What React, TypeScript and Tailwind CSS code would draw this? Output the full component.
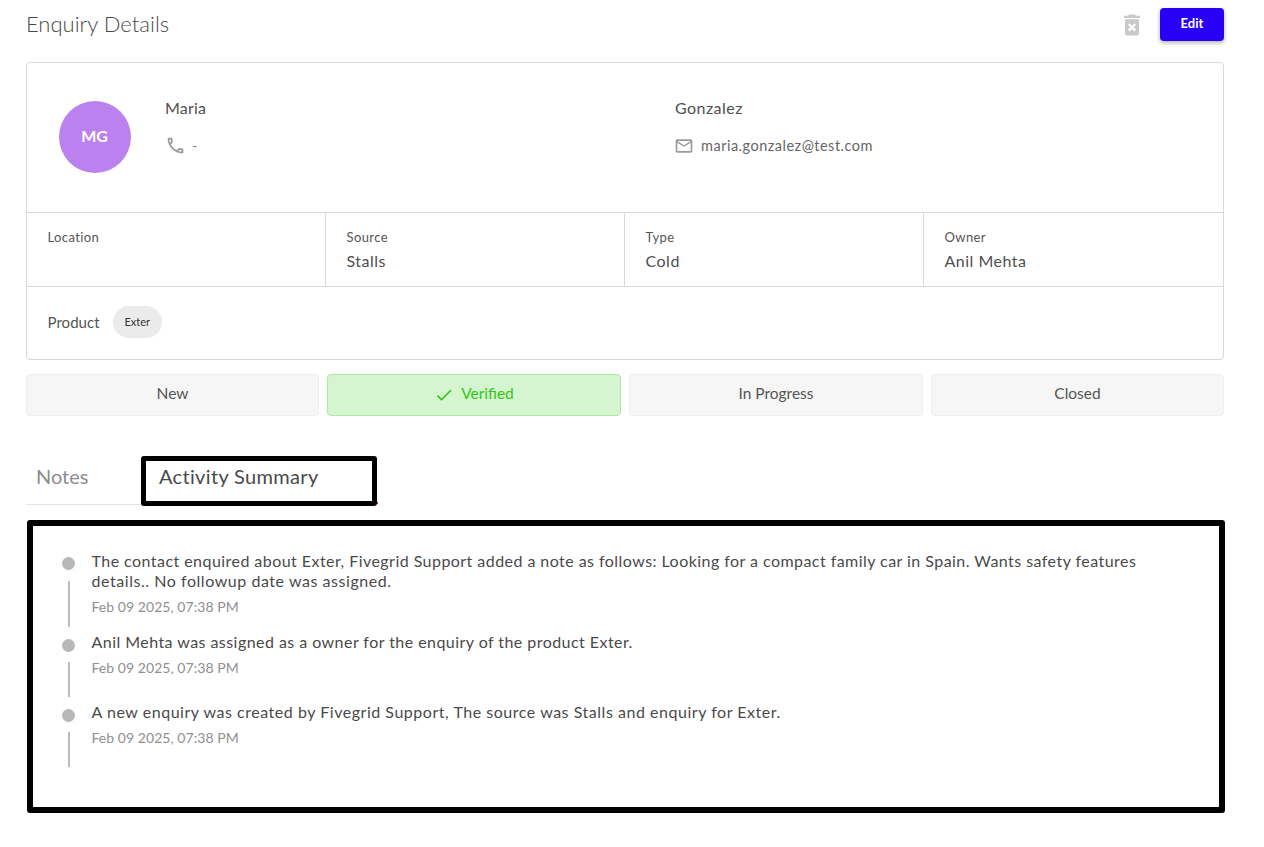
import { MdDeleteForever, MdOutlineCall, MdOutlineMailOutline, MdCheck } from "react-icons/md";

const font = { fontFamily: '"Lato", "Noto Sans", sans-serif' };

function InfoCell({ label, value, last }: { label: string; value?: string; last?: boolean }) {
  return (
    <div className={`h-[74px] pl-[20.5px] pt-[14px] ${last ? "" : "border-r border-[#d9d9d9]"}`}>
      <div className="text-[13px] leading-[20px] text-[#555] tracking-[0.4px]">{label}</div>
      {value && <div className="text-[16px] leading-[28px] text-[#4f4f4f] tracking-[0.5px]">{value}</div>}
    </div>
  );
}

function Status({ label, active }: { label: string; active?: boolean }) {
  return (
    <div
      className={`h-[42px] pb-[2px] flex items-center justify-center rounded-[4px] border text-[15.5px] ${
        active
          ? "bg-[#d5f4d0] border-[#ade8a5] text-[#2fc712]"
          : "bg-[#f6f6f6] border-[#eeeeee] text-[#555]"
      }`}
    >
      {active && <MdCheck className="mr-[7px] mt-[2px] text-[20px]" />}
      {label}
    </div>
  );
}

function Entry({
  lines,
  h,
  dotTop,
  lineClass,
}: {
  lines: { text: string; cls: string }[];
  h: string;
  dotTop: string;
  lineClass: string;
}) {
  return (
    <div className={`flex ${h}`}>
      <div className={`w-[58.5px] shrink-0 pl-[29px] ${dotTop}`}>
        <div className="w-[13px] h-[13px] rounded-full bg-[#b8b8b8]" />
        <div className={`ml-[5.5px] w-[2px] bg-[#bcbcbc] ${lineClass}`} />
      </div>
      <div className="flex-1 pr-[60px]">
        {lines.map((l) => (
          <div key={l.text} className={`text-[16px] leading-[20px] text-[#4a4a4a] ${l.cls}`}>
            {l.text}
          </div>
        ))}
        <div className="mt-[6px] text-[14px] leading-[20px] text-[#909090] tracking-[0.05px]">Feb 09 2025, 07:38 PM</div>
      </div>
    </div>
  );
}

export default function App() {
  return (
    <div style={font} className="w-[1264px] h-[847px] bg-white pl-[26px] pr-[40px] overflow-hidden">
      <div className="flex items-center justify-between h-[62px] pb-[16px]">
        <div className="text-[22px] text-[#4a4a4a] font-light tracking-[0px]">Enquiry Details</div>
        <div className="flex items-center gap-[14px] mt-[2px]">
          <MdDeleteForever className="text-[#c9c9c9] text-[28px] mt-[2px]" />
          <button className="w-[64px] h-[33px] rounded-[4px] bg-[#2700f5] text-white text-[13px] font-bold shadow-[0_2px_4px_rgba(0,0,0,0.3)]">
            Edit
          </button>
        </div>
      </div>

      <div className="border border-[#d9d9d9] rounded-[4px] h-[298px]">
        <div className="h-[150px] flex border-b border-[#d9d9d9]">
          <div className="w-[138px] shrink-0 pl-[32px] pt-[38px]">
            <div className="w-[72px] h-[72px] pb-[2px] pr-[1px] rounded-full bg-[#bb82ef] text-white font-bold text-[16px] flex items-center justify-center">
              MG
            </div>
          </div>
          <div className="w-[510px] shrink-0 pt-[33px]">
            <div className="text-[16px] leading-[24px] text-[#4f4f4f] tracking-[0.2px]">Maria</div>
            <div className="mt-[15px] flex items-center text-[#7a7a7a]">
              <MdOutlineCall className="text-[#9a9a9a] text-[21px]" />
              <span className="ml-[6px] text-[14px]">-</span>
            </div>
          </div>
          <div className="flex-1 pt-[33px]">
            <div className="text-[16px] leading-[24px] text-[#4f4f4f] tracking-[0.45px]">Gonzalez</div>
            <div className="mt-[15px] flex items-center">
              <MdOutlineMailOutline className="ml-[-1px] text-[#9a9a9a] text-[20px]" />
              <span className="ml-[7px] text-[14.5px] text-[#666] tracking-[0.5px]">maria.gonzalez@test.com</span>
            </div>
          </div>
        </div>
        <div className="grid grid-cols-4 border-b border-[#d9d9d9] h-[74px]">
          <InfoCell label="Location" />
          <InfoCell label="Source" value="Stalls" />
          <InfoCell label="Type" value="Cold" />
          <InfoCell label="Owner" value="Anil Mehta" last />
        </div>
        <div className="flex items-center h-[72px] pb-[2px] pl-[20.5px]">
          <span className="text-[15px] text-[#555] tracking-[0.05px]">Product</span>
          <span className="ml-[13px] w-[49px] h-[32px] rounded-full bg-[#ebebeb] flex items-center justify-center text-[11px] text-[#333]">
            Exter
          </span>
        </div>
      </div>

      <div className="mt-[14px] grid grid-cols-[293px_294px_294px_293px] gap-[8px]">
        <Status label="New" />
        <Status label="Verified" active />
        <Status label="In Progress" />
        <Status label="Closed" />
      </div>

      <div className="mt-[40px] flex items-start h-[50px]">
        <div className="w-[115px] h-[49px] border-b border-[#e3e3e3] pl-[10px] pt-[6px] text-[20px] leading-[28px] text-[#8c8c8c]">
          Notes
        </div>
        <div className="relative w-[236px] h-[50px] border-[5px] border-black rounded-[3px] pl-[13px] pt-[1px] text-[20px] leading-[28px] text-[#4a4a4a] tracking-[0.33px]">
          Activity Summary
          <span className="absolute right-[-6px] bottom-[-3px] w-[1.5px] h-[2px] bg-[#e5006a]" />
        </div>
      </div>

      <div className="mt-[14px] ml-[1px] w-[1198px] h-[293px] border-[6px] border-black rounded-[3px] pt-[25px]">
        <Entry
          h="h-[81px]"
          dotTop="pt-[6px]"
          lineClass="mt-[11px] h-[46px]"
          lines={[
            {
              text: "The contact enquired about Exter, Fivegrid Support added a note as follows: Looking for a compact family car in Spain. Wants safety features",
              cls: "tracking-[0.45px]",
            },
            { text: "details.. No followup date was assigned.", cls: "tracking-[0.55px]" },
          ]}
        />
        <Entry
          h="h-[70px]"
          dotTop="pt-[7px]"
          lineClass="mt-[10px] h-[35px]"
          lines={[{ text: "Anil Mehta was assigned as a owner for the enquiry of the product Exter.", cls: "tracking-[0.45px]" }]}
        />
        <Entry
          h="h-[70px]"
          dotTop="pt-[7px]"
          lineClass="mt-[10px] h-[35px]"
          lines={[
            {
              text: "A new enquiry was created by Fivegrid Support, The source was Stalls and enquiry for Exter.",
              cls: "tracking-[0.53px]",
            },
          ]}
        />
      </div>
    </div>
  );
}
